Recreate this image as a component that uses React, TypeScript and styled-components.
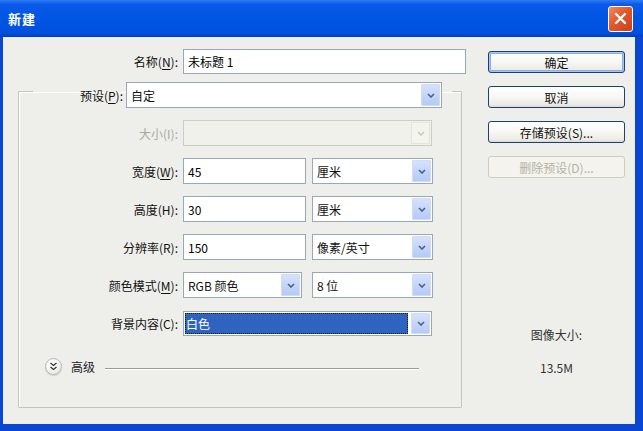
import { styled, createGlobalStyle } from 'styled-components';

const GlobalStyle = createGlobalStyle`
  html, body {
    margin: 0;
    padding: 0;
    background: #ffffff;
  }
  body {
    font-family: "Noto Sans CJK SC", "Liberation Sans", sans-serif;
    font-size: 12px;
    color: #000;
  }
`;

const Chevron = ({ color = '#4d6185' }: { color?: string }) => (
  <svg width="8" height="5" viewBox="0 0 8 5">
    <path d="M1 1 L4 4 L7 1" fill="none" stroke={color} strokeWidth="1.6" />
  </svg>
);

type SelectProps = {
  width: number;
  value?: string;
  disabled?: boolean;
  selected?: boolean;
  height?: number;
};

const Select = ({ width, value = '', disabled, selected, height = 26 }: SelectProps) => (
  <SSelect $width={width} $height={height} $disabled={disabled}>
    <SValue $selected={selected}>
      <span>{value}</span>
    </SValue>
    <SDropButton $disabled={disabled}>
      <Chevron color={disabled ? '#c9c9c0' : '#4d6185'} />
    </SDropButton>
  </SSelect>
);

const App = () => {
  return (
    <>
      <GlobalStyle />
      <SWindow>
        <STitleBar>
          <STitle>新建</STitle>
          <SCloseButton>
            <svg width="13" height="13" viewBox="0 0 13 13">
              <path d="M2 2 L11 11 M11 2 L2 11" stroke="#fff" strokeWidth="2.4" strokeLinecap="round" />
            </svg>
          </SCloseButton>
        </STitleBar>
        <SFrame>
          <SBody>
            <SLeftPane>
              <SNameRow>
                <SLabel $width={175}>
                  名称(<u>N</u>):
                </SLabel>
                <SInput $width={283} $height={25}>未标题 1</SInput>
              </SNameRow>

              <SGroup>
                <SLegend>
                  <SLegendRow>
                    <SLabel $width={90} $gap={3}>
                      预设(<u>P</u>):
                    </SLabel>
                    <Select width={316} value="自定" />
                  </SLegendRow>
                </SLegend>

                <SRows>
                  <SRow>
                    <SLabel $disabled>大小(I):</SLabel>
                    <Select width={249} disabled />
                  </SRow>
                  <SRow>
                    <SLabel>
                      宽度(<u>W</u>):
                    </SLabel>
                    <SInput $width={123}>45</SInput>
                    <SSpacer $w={6} />
                    <Select width={121} value="厘米" />
                  </SRow>
                  <SRow>
                    <SLabel>高度(H):</SLabel>
                    <SInput $width={123}>30</SInput>
                    <SSpacer $w={6} />
                    <Select width={121} value="厘米" />
                  </SRow>
                  <SRow>
                    <SLabel>分辨率(R):</SLabel>
                    <SInput $width={123}>150</SInput>
                    <SSpacer $w={6} />
                    <Select width={121} value="像素/英寸" />
                  </SRow>
                  <SRow>
                    <SLabel>
                      颜色模式(<u>M</u>):
                    </SLabel>
                    <Select width={119} value="RGB 颜色" />
                    <SSpacer $w={10} />
                    <Select width={121} value="8 位" />
                  </SRow>
                  <SRow>
                    <SLabel>背景内容(C):</SLabel>
                    <Select width={249} value="白色" selected height={25} />
                  </SRow>
                  <SAdvancedRow>
                    <SRoundButton>
                      <svg width="9" height="9" viewBox="0 0 9 9">
                        <path d="M1.5 1 L4.5 3.5 L7.5 1 M1.5 5 L4.5 7.5 L7.5 5" fill="none" stroke="#333" strokeWidth="1.3" />
                      </svg>
                    </SRoundButton>
                    <SAdvancedText>高级</SAdvancedText>
                    <SRule />
                  </SAdvancedRow>
                </SRows>
              </SGroup>
            </SLeftPane>

            <SRightPane>
              <SButton $default>确定</SButton>
              <SButton>取消</SButton>
              <SButton>存储预设(S)...</SButton>
              <SButton disabled>删除预设(D)...</SButton>
              <SInfo>
                <span>图像大小:</span>
                <span>13.5M</span>
              </SInfo>
            </SRightPane>
          </SBody>
        </SFrame>
      </SWindow>
    </>
  );
};

const SWindow = styled.div`
  width: 643px;
  height: 431px;
  display: flex;
  flex-direction: column;
  background: #0a46d4;
  overflow: hidden;
`;

const STitleBar = styled.div`
  height: 37px;
  flex-shrink: 0;
  display: flex;
  align-items: center;
  justify-content: space-between;
  padding: 0 10px 0 8px;
  box-sizing: border-box;
  background: linear-gradient(#2f7bf5 0%, #0a5ae8 12%, #0055e3 50%, #0050de 88%, #0040c0 100%);
`;

const STitle = styled.span`
  color: #fff;
  font-weight: bold;
  font-size: 13px;
  letter-spacing: 1px;
`;

const SCloseButton = styled.div`
  width: 25px;
  height: 26px;
  box-sizing: border-box;
  border: 1px solid #fff;
  border-radius: 3px;
  display: flex;
  align-items: center;
  justify-content: center;
  background: linear-gradient(135deg, #f08a63 0%, #e2582d 45%, #c8401c 100%);
`;

const SFrame = styled.div`
  flex: 1;
  display: flex;
  padding: 0 8px 7px 3px;
`;

const SBody = styled.div`
  flex: 1;
  display: flex;
  background: #eeeeeb;
`;

const SLeftPane = styled.div`
  width: 463px;
  padding-top: 12px;
  display: flex;
  flex-direction: column;
`;

const SNameRow = styled.div`
  display: flex;
  align-items: center;
  height: 25px;
`;

const SLabel = styled.span<{ $width?: number; $gap?: number; $disabled?: boolean }>`
  width: ${p => p.$width ?? 159}px;
  margin-right: ${p => p.$gap ?? 5}px;
  flex-shrink: 0;
  text-align: right;
  white-space: nowrap;
  color: ${p => (p.$disabled ? '#a9a8a0' : '#111')};

  u {
    text-underline-offset: 2px;
  }
`;

const SInput = styled.div<{ $width: number; $height?: number }>`
  width: ${p => p.$width}px;
  height: ${p => p.$height ?? 26}px;
  box-sizing: border-box;
  border: 1px solid #98a8ba;
  background: #fff;
  display: flex;
  align-items: center;
  padding-left: 4px;
  white-space: nowrap;
`;

const SGroup = styled.fieldset`
  margin: 0 0 0 15px;
  padding: 0 0 23px 0;
  width: 444px;
  box-sizing: border-box;
  border: 1px solid #c4c4bd;
  box-shadow: inset 1px 1px 0 #fff;
  border-radius: 1px;
  min-width: 0;
`;

const SLegend = styled.legend`
  margin-left: 14px;
  padding: 8px 10px 0 0;
`;

const SLegendRow = styled.div`
  display: flex;
  align-items: center;
`;

const SRows = styled.div`
  display: flex;
  flex-direction: column;
  gap: 12px;
  padding-top: 12px;
`;

const SRow = styled.div`
  display: flex;
  align-items: center;
  height: 26px;
`;

const SSpacer = styled.span<{ $w: number }>`
  width: ${p => p.$w}px;
  flex-shrink: 0;
`;

const SSelect = styled.div<{ $width: number; $height: number; $disabled?: boolean }>`
  width: ${p => p.$width}px;
  height: ${p => p.$height}px;
  box-sizing: border-box;
  flex-shrink: 0;
  display: flex;
  padding: 1px;
  border: 1px solid ${p => (p.$disabled ? '#cfcdc3' : '#98a8ba')};
  background: ${p => (p.$disabled ? '#f1f1ec' : '#fff')};
`;

const SValue = styled.div<{ $selected?: boolean }>`
  flex: 1;
  display: flex;
  align-items: center;
  margin-right: ${p => (p.$selected ? 3 : 0)}px;
  padding-left: ${p => (p.$selected ? 1 : 3)}px;
  background: ${p => (p.$selected ? '#2f63c0' : 'transparent')};
  color: ${p => (p.$selected ? '#fff' : '#111')};
  outline: ${p => (p.$selected ? '1px dotted #1b1b1b' : 'none')};
  outline-offset: -1px;
  white-space: nowrap;
  overflow: hidden;
`;

const SDropButton = styled.div<{ $disabled?: boolean }>`
  width: 17px;
  flex-shrink: 0;
  display: flex;
  align-items: center;
  justify-content: center;
  border-radius: 1px;
  background: ${p =>
    p.$disabled ? '#f4f4ef' : 'linear-gradient(#d6e2fc 0%, #c2d3f8 60%, #b6caf5 100%)'};
  border: 1px solid ${p => (p.$disabled ? '#e4e4dc' : '#cfdcf9')};
`;

const SAdvancedRow = styled.div`
  display: flex;
  align-items: center;
  height: 36px;
  padding-left: 26px;
`;

const SRoundButton = styled.div`
  width: 17px;
  height: 17px;
  border-radius: 50%;
  box-sizing: border-box;
  border: 1px solid #b9b9b4;
  background: radial-gradient(circle at 40% 35%, #ffffff 0%, #f2f2ee 55%, #d9d9d3 100%);
  display: flex;
  align-items: center;
  justify-content: center;
  box-shadow: 0 1px 1px rgba(0, 0, 0, 0.15);
`;

const SAdvancedText = styled.span`
  margin-left: 9px;
  color: #222;
`;

const SRule = styled.div`
  height: 0;
  border-top: 1px solid #9a9a96;
  border-bottom: 1px solid #fff;
  margin: 6px 0 0 10px;
  width: 314px;
`;

const SRightPane = styled.div`
  width: 137px;
  margin-left: 22px;
  padding-top: 14px;
  display: flex;
  flex-direction: column;
  align-items: center;
  gap: 13px;
`;

const SButton = styled.button<{ $default?: boolean }>`
  width: 137px;
  height: 22px;
  box-sizing: border-box;
  border-radius: 3px;
  font-family: inherit;
  font-size: 12px;
  padding: 0;
  color: #111;
  border: 1px solid #1c3f74;
  background: linear-gradient(#ffffff 0%, #f7f7f4 50%, #ebeae3 90%, #d8d6cc 100%);
  box-shadow: ${p => (p.$default ? 'inset 0 0 0 1px #a9c4ee, inset 0 0 0 2px #8bb0e8' : 'none')};

  &:disabled {
    color: #b3b2a6;
    border-color: #cfcdc0;
    background: #f4f3ee;
  }
`;

const SInfo = styled.div`
  margin-top: 136px;
  display: flex;
  flex-direction: column;
  align-items: center;
  gap: 17px;
  color: #333;
  line-height: 16px;
`;

export default App;
